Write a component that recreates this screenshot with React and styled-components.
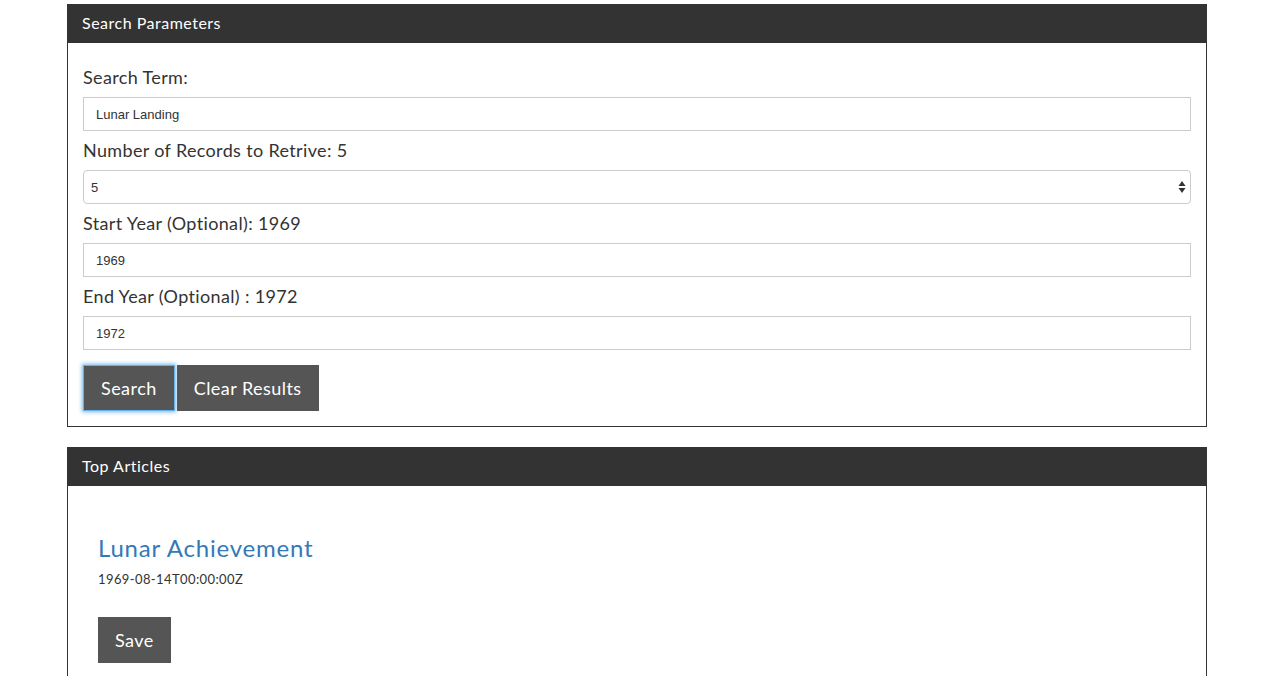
import React, { useState } from "react";
import styled, { createGlobalStyle } from "styled-components";

const GlobalStyle = createGlobalStyle`
  html, body {
    margin: 0;
    padding: 0;
    background: #fff;
    font-family: Lato, "Noto Sans", sans-serif;
    color: #333;
  }
  * {
    box-sizing: border-box;
  }
`;

const Page = styled.div`
  width: 1140px;
  margin-left: 67px;
  padding-top: 4px;
`;

const Panel = styled.section`
  border: 1px solid #333;
  border-top: none;
  margin-bottom: 20px;
`;

const PanelHeading = styled.div`
  height: 39px;
  background: #333;
  color: #fff;
  font-size: 16px;
  letter-spacing: 0.5px;
  display: flex;
  align-items: center;
  padding: 0 15px 2px;
  margin: 0 -1px;
`;

const PanelBody = styled.div`
  padding: ${({ $pad }) => $pad || "15px"};
`;

const Label = styled.label`
  display: block;
  font-size: 18px;
  line-height: 22px;
  letter-spacing: 0.35px;
  margin-bottom: 9px;
`;

const Field = styled.div`
  margin-bottom: ${({ $last }) => ($last ? "15px" : "8px")};
  position: relative;
`;

const Input = styled.input`
  display: block;
  width: 100%;
  height: 34px;
  padding: 0 12px;
  border: 1px solid #ccc;
  border-radius: 0;
  font-family: "Liberation Sans", Arial, sans-serif;
  font-size: 13px;
  color: #333;
  outline: none;
`;

const Select = styled.select`
  display: block;
  width: 100%;
  height: 34px;
  padding: 0 7px;
  border: 1px solid #ccc;
  border-radius: 4px;
  background: #fff;
  font-family: "Liberation Sans", Arial, sans-serif;
  font-size: 13px;
  color: #333;
  appearance: none;
  outline: none;
`;

const Arrows = styled.svg`
  position: absolute;
  right: 5px;
  bottom: 11px;
  pointer-events: none;
`;

const ButtonRow = styled.div`
  display: flex;
  gap: 2px;
`;

const Button = styled.button`
  height: 46px;
  padding: 0 17px;
  background: #555;
  color: #fff;
  border: ${({ $focused }) => ($focused ? "1px solid #66afe9" : "none")};
  box-shadow: ${({ $focused }) =>
    $focused ? "0 0 4px 1px rgba(102,175,233,0.9)" : "none"};
  font-family: Lato, "Noto Sans", sans-serif;
  font-size: 18px;
  letter-spacing: 0.45px;
  cursor: pointer;
  outline: none;
`;

const Article = styled.div`
  padding: 49px 15px 0;
`;

const ArticleTitle = styled.a`
  display: block;
  color: #337ab7;
  font-size: 24px;
  line-height: 26px;
  letter-spacing: 0.8px;
  text-decoration: none;
`;

const ArticleDate = styled.div`
  font-size: 13px;
  line-height: 18px;
  letter-spacing: 0.4px;
  margin-top: 9px;
  margin-bottom: 29px;
`;

export default function App() {
  const [term, setTerm] = useState("Lunar Landing");
  const [count, setCount] = useState("5");
  const [start, setStart] = useState("1969");
  const [end, setEnd] = useState("1972");

  return (
    <Page>
      <GlobalStyle />
      <Panel>
        <PanelHeading>Search Parameters</PanelHeading>
        <PanelBody $pad="23px 15px 15px">
          <Field>
            <Label>Search Term:</Label>
            <Input value={term} onChange={(e) => setTerm(e.target.value)} />
          </Field>
          <Field>
            <Label>Number of Records to Retrive: {count}</Label>
            <Select value={count} onChange={(e) => setCount(e.target.value)}>
              <option value="1">1</option>
              <option value="5">5</option>
              <option value="10">10</option>
            </Select>
            <Arrows width="8" height="12" viewBox="0 0 8 12">
              <path d="M4 0 L7.5 5 H0.5 Z" fill="#333" />
              <path d="M4 12 L7.5 7 H0.5 Z" fill="#333" />
            </Arrows>
          </Field>
          <Field>
            <Label>Start Year (Optional): {start}</Label>
            <Input value={start} onChange={(e) => setStart(e.target.value)} />
          </Field>
          <Field $last>
            <Label>End Year (Optional) : {end}</Label>
            <Input value={end} onChange={(e) => setEnd(e.target.value)} />
          </Field>
          <ButtonRow>
            <Button $focused>Search</Button>
            <Button>Clear Results</Button>
          </ButtonRow>
        </PanelBody>
      </Panel>
      <Panel>
        <PanelHeading>Top Articles</PanelHeading>
        <PanelBody $pad="0 15px 15px">
          <Article>
            <ArticleTitle href="#">Lunar Achievement</ArticleTitle>
            <ArticleDate>1969-08-14T00:00:00Z</ArticleDate>
            <Button>Save</Button>
          </Article>
        </PanelBody>
      </Panel>
    </Page>
  );
}
